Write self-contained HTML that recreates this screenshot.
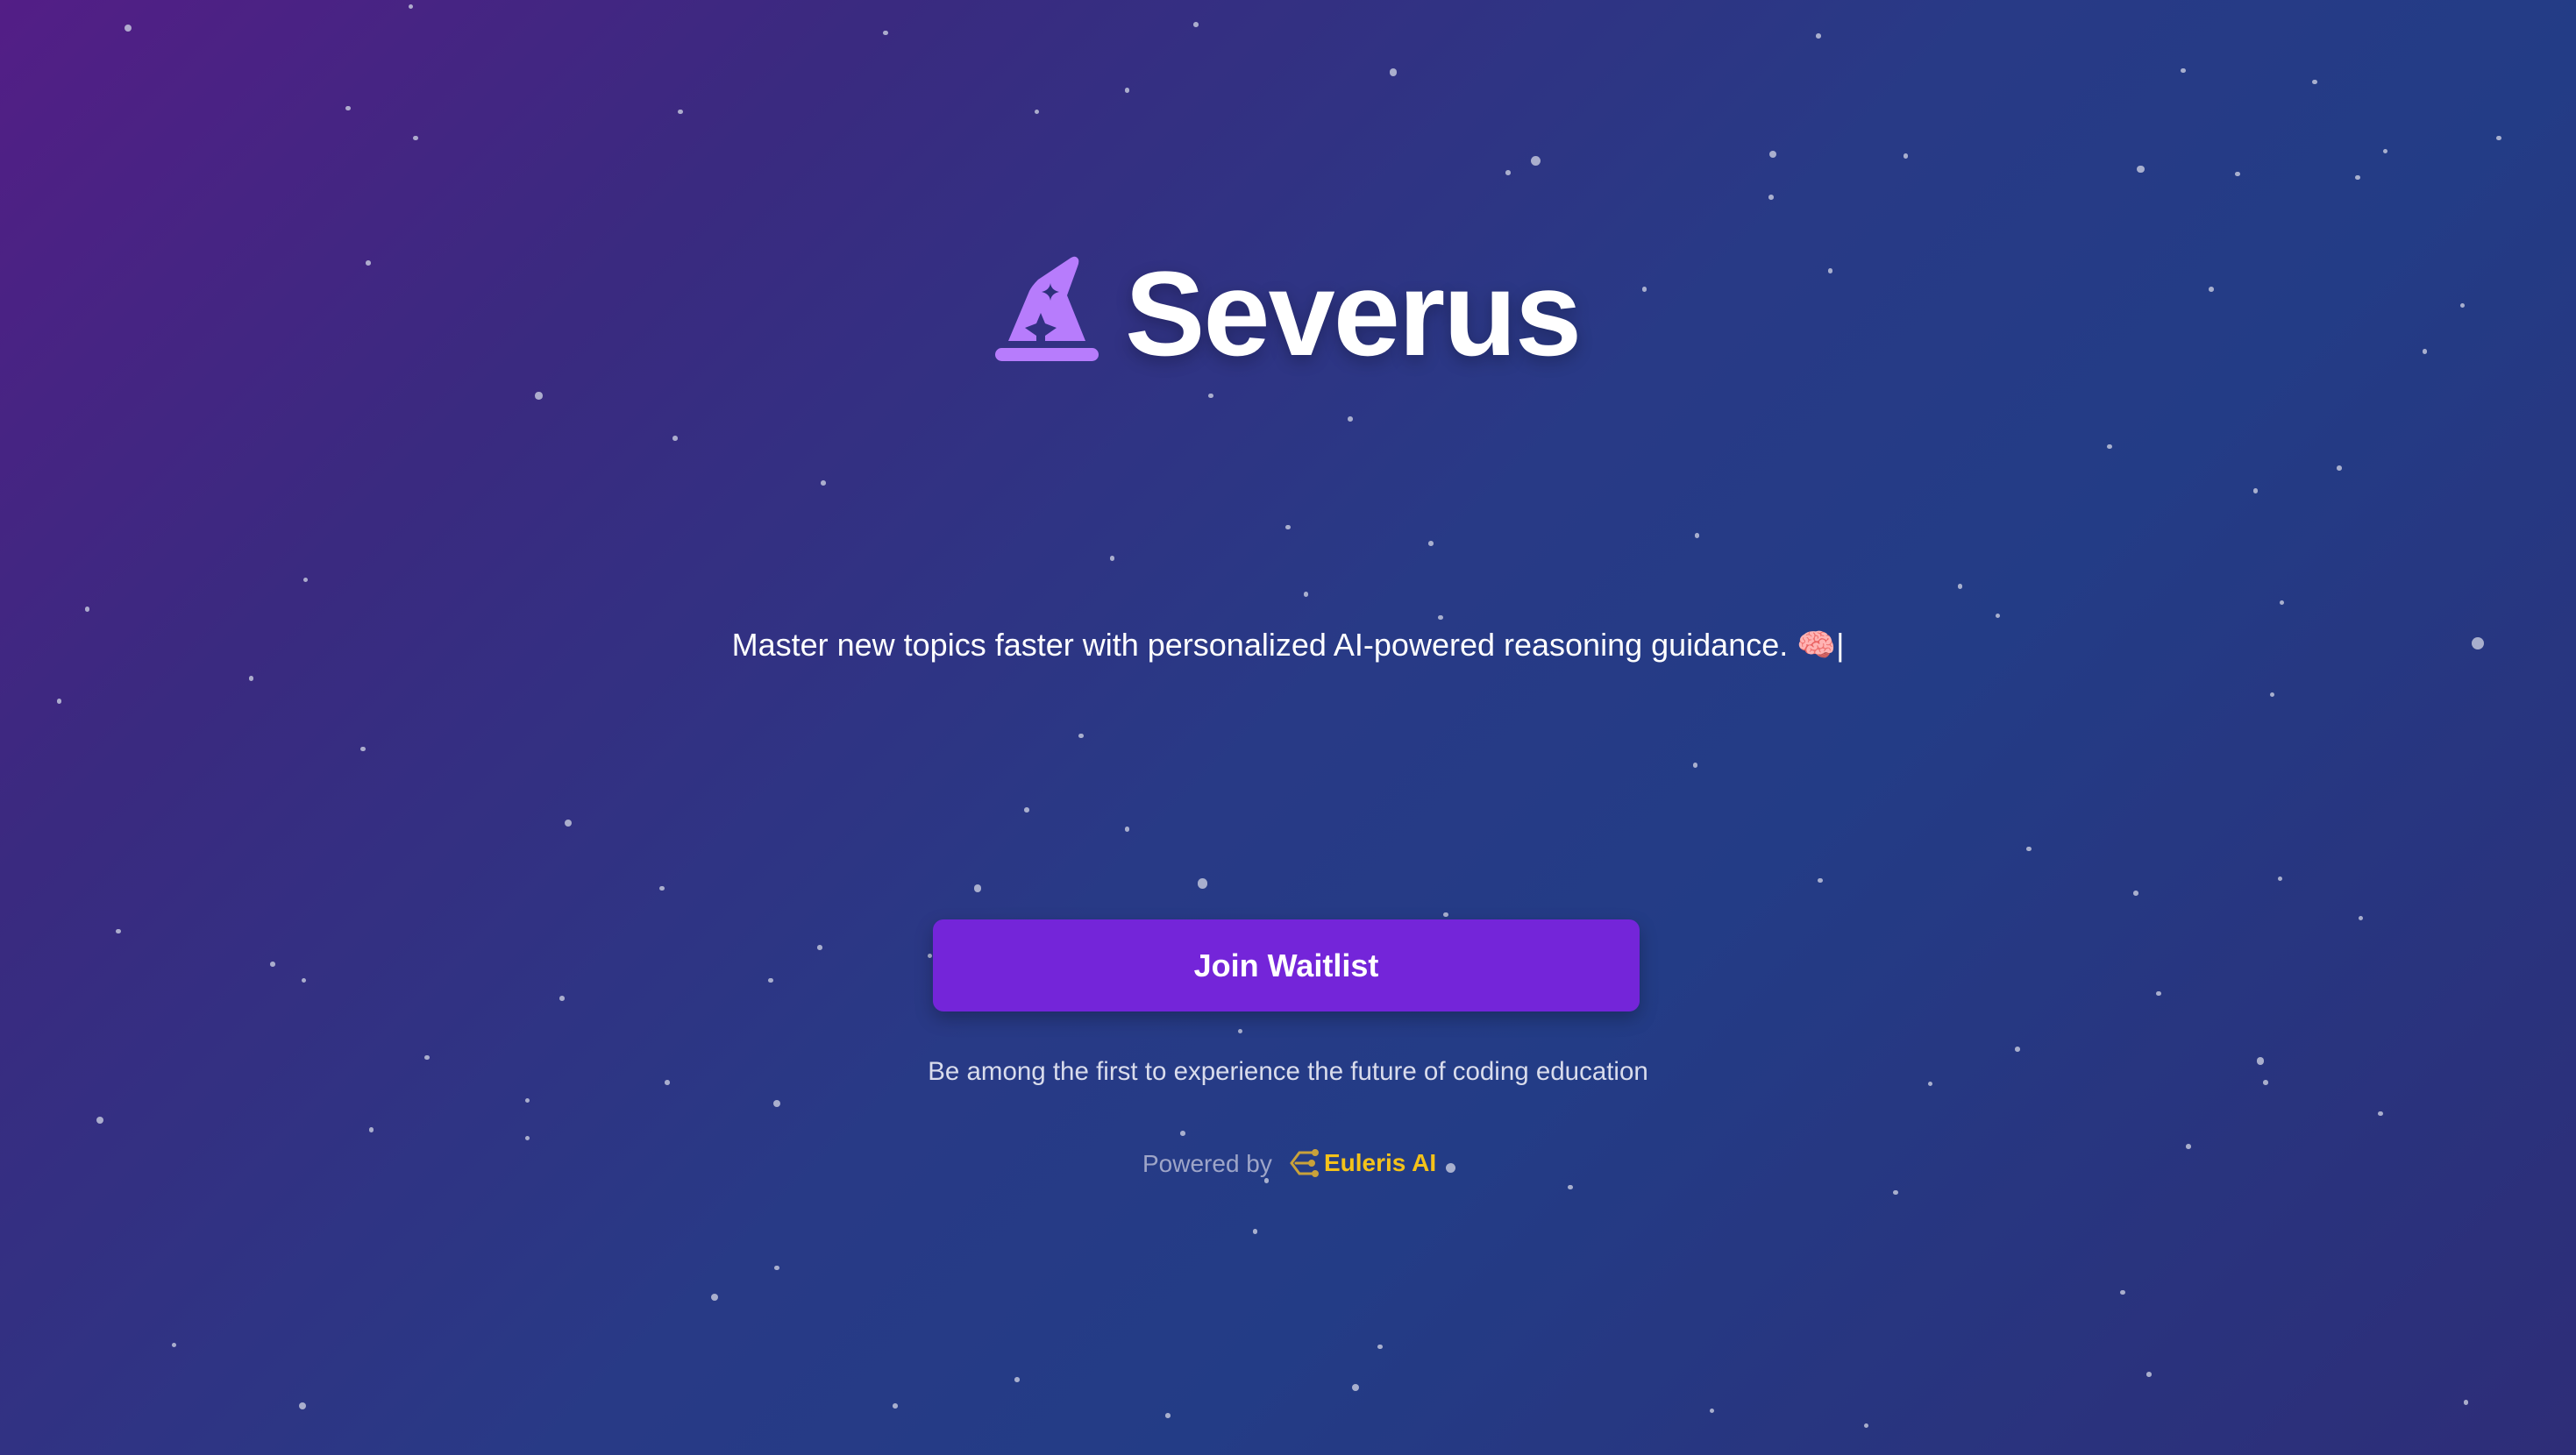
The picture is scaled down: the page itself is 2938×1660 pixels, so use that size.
<!DOCTYPE html>
<html><head><meta charset="utf-8">
<style>
html,body{margin:0;padding:0;}
body{width:2938px;height:1660px;overflow:hidden;position:relative;
background:linear-gradient(135deg,#531e86 0%,#3a2a80 22%,#283a86 50%,#233c86 65%,#2e2d78 100%);
font-family:"Liberation Sans","Noto Sans CJK SC",sans-serif;}
.s{position:absolute;border-radius:50%;background:#c9cde0;opacity:.8}
#title{position:absolute;left:1283px;top:290px;font-size:137px;font-weight:bold;color:#fff;letter-spacing:-2px;line-height:1;text-shadow:0 6px 18px rgba(0,0,0,.25)}
#hat{position:absolute;left:1134px;top:290px}
#tag{position:absolute;left:0;width:2938px;top:715px;text-align:center;color:#fff;font-size:36px;white-space:nowrap}
#btn{position:absolute;left:1064px;top:1049px;width:806px;height:105px;background:#7425d9;border-radius:12px;box-shadow:0 8px 20px rgba(0,0,0,.25);color:#fff;font-weight:bold;font-size:36px;text-align:center;line-height:105px}
#sub{position:absolute;left:0;width:2938px;top:1206px;text-align:center;color:#d9dcec;font-size:29.5px}
#pw{position:absolute;left:1303px;top:1312px;color:#9ea5c8;font-size:28px;white-space:nowrap}
#eu{position:absolute;left:1470px;top:1310px;}
#el{position:absolute;left:1510px;top:1311px;color:#f4c21a;font-size:28px;font-weight:bold}
</style></head><body>
<div id="stars"></div>
<svg id="hat" width="122" height="124" viewBox="0 0 122 124">
<path d="M86 5 Q93 0 96 6 Q97 9 95 14 L83 47 L104 99 L58 99 L58 93 L71 84 L58 79 L53 67 L48 79 L35 84 L48 93 L48 99 L16 99 L40 42 Q43 36 50 29 Z" fill="#b77cfc"/>
<path d="M64 33 Q65 41 74 43 Q65 45 64 53 Q63 45 54 43 Q63 41 64 33 Z" fill="#2e307c"/>
<rect x="1" y="107" width="118" height="15" rx="7.5" fill="#b77cfc"/>
</svg>
<div id="title">Severus</div>
<div id="tag">Master new topics faster with personalized AI-powered reasoning guidance. 🧠|</div>
<div id="btn">Join Waitlist</div>
<div id="sub">Be among the first to experience the future of coding education</div>
<div id="pw">Powered by</div>
<svg id="eu" width="34" height="34" viewBox="0 0 34 34" fill="none" stroke="#c9a23a" stroke-width="3" stroke-linecap="round">
<path d="M30 5 H12 L3 17 L12 29 H30"/><path d="M8 17 H26"/>
<circle cx="30" cy="5" r="2.5" fill="#c9a23a"/><circle cx="30" cy="29" r="2.5" fill="#c9a23a"/><circle cx="26" cy="17" r="2.5" fill="#c9a23a"/>
</svg>
<div id="el">Euleris AI</div>
<script>
var p=[[78,17,3],[250,4,2],[212,66,2],[253,84,2],[414,68,2],[539,20,2],[728,15,2],[686,55,2],[631,68,2],[848,44,3],[935,98,4],[918,105,2],[1079,94,3],[1078,120,2],[1107,22,2],[1160,95,2],[1329,43,2],[1409,50,2],[1452,92,2],[1435,108,2],[1362,106,2],[1303,103,3],[1521,84,2],[224,160,2],[328,241,3],[411,267,2],[501,294,2],[737,241,2],[822,255,2],[1001,176,2],[1114,165,2],[1346,176,2],[1499,186,2],[1476,214,2],[1284,272,2],[1373,299,2],[1424,285,2],[186,353,2],[53,371,2],[153,413,2],[36,427,2],[221,456,2],[784,321,2],[871,331,2],[677,340,2],[1033,326,2],[795,362,2],[877,376,2],[1193,357,2],[1216,375,2],[1389,367,2],[1508,392,5],[1383,423,2],[658,448,2],[1032,466,2],[346,501,3],[625,493,2],[686,505,2],[403,541,2],[595,541,3],[732,538,4],[880,557,2],[1108,536,2],[1235,517,2],[1300,544,2],[1388,535,2],[1437,559,2],[72,567,2],[166,587,2],[185,597,2],[499,577,2],[469,597,2],[342,608,2],[566,582,2],[1314,605,2],[755,628,2],[1228,639,2],[1376,646,3],[1379,659,2],[260,644,2],[406,659,2],[321,670,2],[473,672,3],[61,682,3],[226,688,2],[321,693,2],[720,690,2],[771,719,2],[883,711,4],[956,723,2],[1175,660,2],[1449,678,2],[1332,698,2],[1154,726,2],[764,750,2],[473,772,2],[435,790,3],[106,819,2],[184,856,3],[545,856,2],[619,840,2],[711,862,2],[825,845,3],[840,820,2],[1042,859,2],[1136,868,2],[1292,787,2],[1308,837,2],[1501,854,2]];
var h='';for(var i=0;i<p.length;i++){var x=p[i][0]*1.8737,y=p[i][1]*1.8737,r=p[i][2]*1.4;h+='<div class="s" style="left:'+(x-r)+'px;top:'+(y-r)+'px;width:'+(2*r)+'px;height:'+(2*r)+'px"></div>';}
document.getElementById('stars').innerHTML=h;
</script>
</body></html>
